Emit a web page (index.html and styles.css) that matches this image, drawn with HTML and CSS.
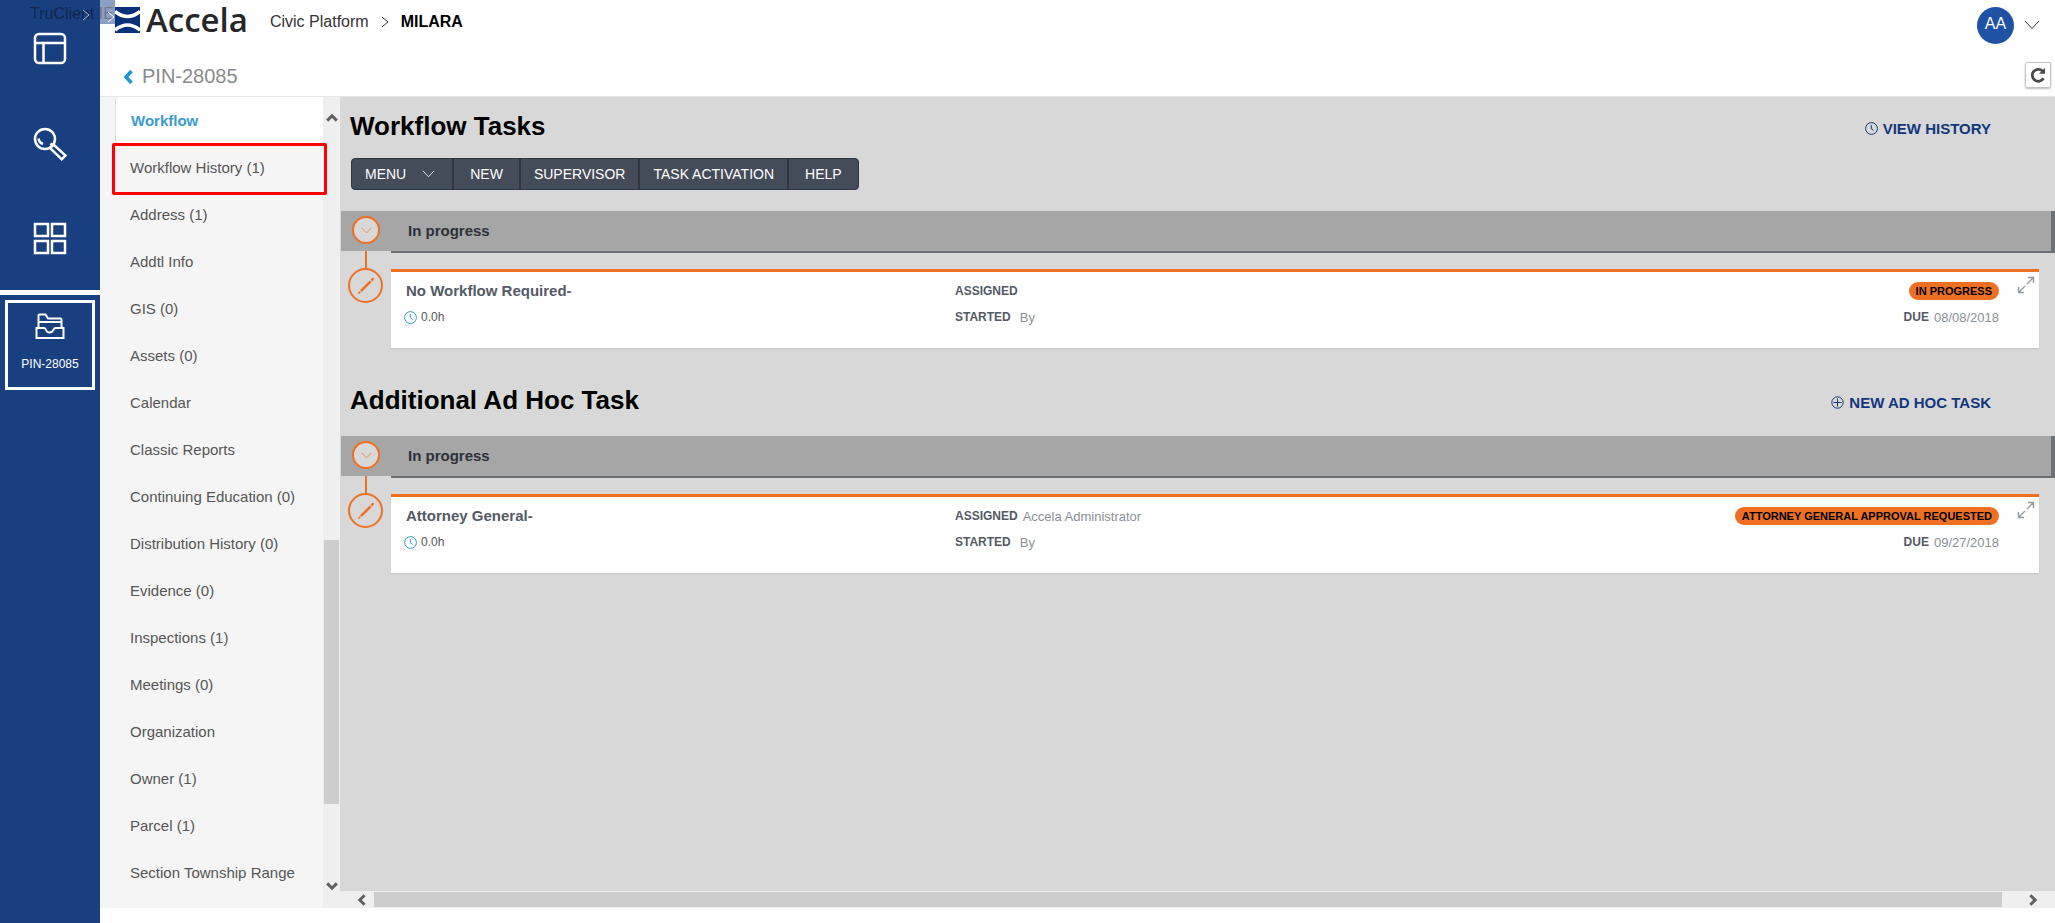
FILE: index.html
```html
<!DOCTYPE html>
<html lang="en">
<head>
<meta charset="utf-8">
<title>PIN-28085 - Civic Platform</title>
<link rel="stylesheet" href="styles.css">
</head>
<body>
<svg class="defs" aria-hidden="true">
  <symbol id="clock" viewBox="0 0 13 13"><circle cx="6.5" cy="6.5" r="5.9"/><path d="M6.3 3v3.8L8.6 8.4"/></symbol>
  <symbol id="plus" viewBox="0 0 13 13"><circle cx="6.5" cy="6.5" r="5.7"/><path d="M6.5 2.5v8M2.5 6.5h8"/></symbol>
  <symbol id="chev" viewBox="0 0 16 10"><path d="M1 1l7 7.500L15 1"/></symbol>
  <symbol id="arrow" viewBox="0 0 12 12"><path d="M1.200 8.600L6 3.800l4.800 4.800"/></symbol>
  <symbol id="expand" viewBox="0 0 18 18"><path d="M10 8l6-6M11 1.500h5.500V7M8 10l-6 6M1.500 11v5.500H7"/></symbol>
  <symbol id="pencil" viewBox="0 0 18 18"><path fill="currentColor" d="M.8 17.200l1.400-3.200 1.800 1.800zM2.900 13.300L12.800 3.400l1.800 1.800L4.700 15.100zM13.500 2.700l1.700-1.700q.8-.6 1.500 0t.1 1.500l-1.600 1.900z"/></symbol>
</svg>
<div class="app">
  <aside class="rail">
    <a class="rail-link" href="#" aria-label="Dashboard"><svg class="rail-icon" viewBox="0 0 34 34"><rect x="2" y="2" width="30" height="29" rx="4"/><path d="M2 11h30M10.500 11v20"/></svg></a>
    <a class="rail-link" href="#" aria-label="Search"><svg class="rail-icon" viewBox="0 0 34 34"><circle cx="12" cy="12" r="10"/><path d="M5.500 11.500q.5 4 4.500 5.500M17 21l3.500-3.500 12 11-3.800 3.800zM19.500 18.500l-2-2"/></svg></a>
    <a class="rail-link" href="#" aria-label="Apps"><svg class="rail-icon" viewBox="0 0 34 34"><path d="M2 2h13v12H2zM19 2h13v12H19zM2 19h13v12H2zM19 19h13v12H19z"/></svg></a>
    <div class="rail-tab">
      <a class="record-tab" href="#">
        <svg class="record-icon" viewBox="0 0 30 27"><path d="M3.500 15V2.500q0-1 1-1h6l2.500 4h12.500q1 0 1 1V15M3.500 9h23M1.500 15h7.500q1.500 0 2 2 1 2.500 3.500 2.500T18.500 17q.5-2 2-2h8v10h-27z"/></svg>
        <span>PIN-28085</span>
      </a>
    </div>
  </aside>
  <div class="page">
    <header class="header">
      <div class="top-row">
        <a class="logo" href="#">
          <svg class="logo-mark" viewBox="0 0 25 26"><path fill="#06307a" d="M0 0h25v26H0z"/><path d="M0 4.500q12.500 10 25 0M0 23q12.500-10 25 0" fill="none" stroke="#fff" stroke-width="3.600"/></svg>
          <span class="logo-name">Accela</span>
        </a>
        <nav class="crumbs" aria-label="Breadcrumb">
          <a href="#">Civic Platform</a>
          <svg class="crumb-sep" viewBox="0 0 8 12"><path d="M1 1l6 5-6 5"/></svg>
          <strong>MILARA</strong>
        </nav>
        <button class="account" type="button"><span class="avatar">AA</span><svg class="account-chev"><use href="#chev"/></svg></button>
      </div>
      <div class="record-row">
        <a class="back" href="#"><svg class="back-icon" viewBox="0 0 10 14"><path d="M8.500 1L3 7l5.500 6"/></svg>PIN-28085</a>
        <button class="refresh" type="button" aria-label="Refresh"><svg class="refresh-icon" viewBox="0 0 16 16"><path d="M13.500 11.300A6 6 0 1 1 12.500 4" fill="none" stroke="#4a4a4a" stroke-width="2.800"/><path d="M15 .8v6H9z" fill="#4a4a4a"/></svg></button>
      </div>
    </header>
    <div class="body">
      <nav class="side" aria-label="Record sections">
        <a class="item active" href="#">Workflow</a>
        <a class="item marked" href="#">Workflow History (1)</a>
        <a class="item" href="#">Address (1)</a>
        <a class="item" href="#">Addtl Info</a>
        <a class="item" href="#">GIS (0)</a>
        <a class="item" href="#">Assets (0)</a>
        <a class="item" href="#">Calendar</a>
        <a class="item" href="#">Classic Reports</a>
        <a class="item" href="#">Continuing Education (0)</a>
        <a class="item" href="#">Distribution History (0)</a>
        <a class="item" href="#">Evidence (0)</a>
        <a class="item" href="#">Inspections (1)</a>
        <a class="item" href="#">Meetings (0)</a>
        <a class="item" href="#">Organization</a>
        <a class="item" href="#">Owner (1)</a>
        <a class="item" href="#">Parcel (1)</a>
        <a class="item" href="#">Section Township Range</a>
      </nav>
      <div class="vscroll">
        <svg class="arrow"><use href="#arrow"/></svg>
        <div class="vtrack"><div class="vthumb"></div></div>
        <svg class="arrow down"><use href="#arrow"/></svg>
      </div>
      <div class="main-col">
        <main class="main">
          <section>
            <div class="head">
              <h2>Workflow Tasks</h2>
              <a class="action" href="#"><svg class="action-icon"><use href="#clock"/></svg>VIEW HISTORY</a>
            </div>
            <div class="toolbar">
              <button class="tool menu" type="button">MENU<svg class="tool-chev"><use href="#chev"/></svg></button>
              <button class="tool wide" type="button">NEW</button>
              <button class="tool" type="button">SUPERVISOR</button>
              <button class="tool" type="button">TASK ACTIVATION</button>
              <button class="tool wide" type="button">HELP</button>
            </div>
            <div class="status">
              <button class="toggle" type="button" aria-label="Collapse"><svg class="toggle-chev"><use href="#chev"/></svg></button>
              <h3>In progress</h3>
            </div>
            <div class="task">
              <div class="node"><button class="edit" type="button" aria-label="Edit task"><svg class="edit-icon"><use href="#pencil"/></svg></button></div>
              <article class="card">
                <div class="cell"><h4>No Workflow Required-</h4><div class="hours"><svg class="hours-icon"><use href="#clock"/></svg>0.0h</div></div>
                <div class="cell"><div class="line"><b>ASSIGNED</b></div><div class="line"><b>STARTED</b><span class="by">By</span></div></div>
                <div class="cell end"><div class="line"><span class="pill">IN PROGRESS</span></div><div class="line"><b>DUE</b><span>08/08/2018</span></div></div>
                <button class="expand" type="button" aria-label="Expand"><svg class="expand-icon"><use href="#expand"/></svg></button>
              </article>
            </div>
          </section>
          <section class="adhoc">
            <div class="head">
              <h2>Additional Ad Hoc Task</h2>
              <a class="action" href="#"><svg class="action-icon"><use href="#plus"/></svg>NEW AD HOC TASK</a>
            </div>
            <div class="status">
              <button class="toggle" type="button" aria-label="Collapse"><svg class="toggle-chev"><use href="#chev"/></svg></button>
              <h3>In progress</h3>
            </div>
            <div class="task">
              <div class="node"><button class="edit" type="button" aria-label="Edit task"><svg class="edit-icon"><use href="#pencil"/></svg></button></div>
              <article class="card">
                <div class="cell"><h4>Attorney General-</h4><div class="hours"><svg class="hours-icon"><use href="#clock"/></svg>0.0h</div></div>
                <div class="cell"><div class="line"><b>ASSIGNED</b><span>Accela Administrator</span></div><div class="line"><b>STARTED</b><span class="by">By</span></div></div>
                <div class="cell end"><div class="line"><span class="pill">ATTORNEY GENERAL APPROVAL REQUESTED</span></div><div class="line"><b>DUE</b><span>09/27/2018</span></div></div>
                <button class="expand" type="button" aria-label="Expand"><svg class="expand-icon"><use href="#expand"/></svg></button>
              </article>
            </div>
          </section>
        </main>
        <div class="hscroll">
          <svg class="arrow left"><use href="#arrow"/></svg>
          <div class="hthumb"></div>
          <svg class="arrow right"><use href="#arrow"/></svg>
        </div>
      </div>
    </div>
  </div>
  <div class="client-tag">TruClient <span class="tag-end">IE</span><svg class="tag-arrow" viewBox="0 0 8 12"><path d="M1 1l6 5-6 5"/></svg><svg class="tag-arrow second" viewBox="0 0 8 12"><path d="M1 1l6 5-6 5"/></svg></div>
</div>
</body>
</html>
```
FILE: styles.css
```css
* { box-sizing: border-box; }
body { margin: 0; font-family: "Liberation Sans", Arial, sans-serif; font-size: 15px; color: #555; background: #fff; }
a { color: inherit; text-decoration: none; }
button { font: inherit; color: inherit; background: none; border: 0; padding: 0; }
h2, h3, h4 { margin: 0; }
svg { display: block; flex: none; fill: none; stroke: currentColor; }
.defs { display: none; }

.app { position: relative; display: grid; grid-template-columns: 100px 1fr; min-height: 100vh; }

/* icon rail */
.rail { background: #183f80; color: #fff; padding-top: 1px; }
.rail-link { display: flex; height: 95px; align-items: center; justify-content: center; }
.rail-link:last-of-type { height: 99px; padding-bottom: 4px; }
.rail-icon { width: 34px; height: 34px; stroke-width: 2.5; }
.rail-tab { border-top: 5px solid #fff; padding: 5px; }
.record-tab { display: flex; flex-direction: column; align-items: center; justify-content: center; gap: 16px; height: 90px; padding-bottom: 5px; border: 3px solid #fff; font-size: 12px; line-height: 16px; }
.record-icon { width: 30px; height: 27px; stroke-width: 2; }

/* header */
.page { display: flex; flex-direction: column; min-width: 0; padding-bottom: 15px; }
.header { height: 97px; border-bottom: 1px solid #e6e6e6; }
.top-row { display: flex; align-items: center; height: 50px; padding: 0 15px; }
.logo { display: flex; align-items: center; gap: 6px; height: 40px; margin-bottom: 10px; color: #262729; }
.logo-mark { width: 25px; height: 26px; stroke: none; }
.logo-name { font: 600 33px/40px "Open Sans", "Noto Sans", sans-serif; }
.crumbs { display: flex; align-items: center; gap: 12px; margin: 0 auto 7px 22px; font-size: 16px; color: #333; }
.crumbs strong { color: #000; }
.crumb-sep { width: 8px; height: 12px; }
.account { display: flex; align-items: center; gap: 10px; color: #333; }
.avatar { width: 37px; height: 37px; border-radius: 50%; background: #1d52a5; color: #fff; font-size: 16px; line-height: 34px; text-align: center; }
.account-chev { width: 16px; height: 10px; }
.record-row { display: flex; align-items: center; justify-content: space-between; height: 46px; padding: 4px 4px 0 23px; }
.back { display: flex; align-items: center; gap: 9px; padding-top: 3px; font-size: 20px; color: #8a8a8a; }
.back-icon { width: 10px; height: 14px; color: #1b95d4; stroke-width: 3.5; }
.refresh { display: flex; align-items: center; justify-content: center; width: 26px; height: 26px; border: 1px solid #c4c4c4; border-radius: 2px; box-shadow: 0 1px 2px #bbb; }
.refresh-icon { width: 16px; height: 16px; stroke: none; }

/* section list */
.body { flex: 1; display: grid; grid-template-columns: 223px 17px minmax(0, 1fr); }
.side { background: #f5f5f5; padding-left: 15px; }
.item { display: flex; align-items: center; height: 47px; padding: 0 0 1px 15px; }
.active { background: #fff; color: #3a9bd0; font-weight: bold; border-left: 1px solid #ddd; border-radius: 4px 0 0 4px; }
.marked { position: relative; }
.marked::after { content: ""; position: absolute; inset: -1px -4px -4px -3px; border: 3px solid #f00; border-radius: 2px; }

/* scrollbars */
.vscroll { display: flex; flex-direction: column; align-items: center; padding: 15px 0 16px; background: #efefef; }
.arrow { width: 12px; height: 12px; color: #606060; stroke-width: 3; }
.down { transform: rotate(180deg); }
.left { transform: rotate(-90deg); }
.right { transform: rotate(90deg); }
.vtrack { flex: 1; width: 15px; display: grid; grid-template-rows: 55fr 35fr 10fr; }
.vthumb { grid-row: 2; background: #cdcdcd; }
.hscroll { display: flex; align-items: center; height: 17px; padding: 0 16px; background: #efefef; }
.hthumb { flex: 1; height: 15px; margin: 0 25px 0 6px; background: #cdcdcd; }

/* workflow */
.main-col { display: flex; flex-direction: column; }
.main { flex: 1; background: #d8d8d8; padding: 14px 0 0 1px; }
.adhoc { margin-top: 37px; }
.head { display: flex; align-items: center; justify-content: space-between; height: 30px; padding: 0 64px 0 9px; color: #000; }
h2 { font-size: 26px; line-height: 30px; }
.action { display: flex; align-items: center; gap: 5px; margin-top: 4px; color: #12377c; font-weight: bold; }
.action-icon { width: 13px; height: 13px; }
.toolbar { display: flex; width: max-content; height: 32px; margin: 17px 0 0 10px; border: 1px solid #2f3640; border-radius: 4px; background: #454c59; color: #fff; font-size: 14px; }
.tool { display: flex; align-items: center; gap: 16px; padding: 0 13px; }
.menu { padding-right: 17px; }
.wide { padding: 0 16px; }
.tool + .tool { border-left: 2px solid #2f3640; }
.tool-chev { width: 13px; height: 8px; }
.status { position: relative; display: flex; align-items: center; gap: 28px; height: 40px; margin-top: 21px; padding-left: 11px; background: #a6a6a6; border-right: 4px solid #6c6f75; color: #2d3039; }
.status::after { content: ""; position: absolute; left: 50px; right: -4px; top: 100%; height: 2px; background: #6c7075; }
h3 { font-size: 15px; line-height: 20px; }
.toggle { display: flex; align-items: center; justify-content: center; width: 28px; height: 28px; margin-bottom: 2px; border: 2px solid #f07023; border-radius: 50%; background: #d8d8d8; color: #f07023; }
.toggle-chev { width: 11px; height: 7px; }
.task { display: flex; gap: 8px; padding: 0 16px 0 7px; }
.node { width: 35px; }
.node::before { content: ""; display: block; width: 2px; height: 17px; margin: 0 auto; background: #f07023; }
.edit { display: flex; align-items: center; justify-content: center; width: 35px; height: 35px; border: 2px solid #f07023; border-radius: 50%; color: #f07023; }
.edit-icon { width: 18px; height: 18px; stroke: none; }
.card { position: relative; flex: 1; display: grid; grid-template-columns: 549px 1fr auto; min-height: 79px; margin-top: 18px; padding: 9px 40px 0 15px; background: #fff; border-top: 3px solid #f07023; box-shadow: 0 1px 1px #c8c8c8; }
h4 { font-size: 15px; line-height: 20px; color: #535a66; }
.cell { display: flex; flex-direction: column; gap: 6px; }
.hours { display: flex; align-items: center; gap: 4px; height: 20px; font-size: 12px; margin-left: -2px; }
.hours-icon { width: 13px; height: 13px; color: #2f9fd0; }
.line { display: flex; align-items: center; gap: 5px; height: 20px; font-size: 13px; color: #8b9097; }
.line b { font-size: 12px; color: #535a66; }
.by { padding-left: 4px; }
.end { align-items: flex-end; }
.pill { height: 18px; padding: 0 7px; border-radius: 9px; background: #f07023; color: #000; font-weight: bold; font-size: 11px; line-height: 18px; }
.expand { position: absolute; top: 4px; right: 4px; color: #9299a5; }
.expand-icon { width: 18px; height: 18px; stroke-width: 1.4; }

/* recorder label floating over the rail */
.client-tag { position: absolute; left: 0; top: 0; width: 115px; height: 24px; padding: 5px 0 0 30px; overflow: hidden; font-size: 16px; line-height: 18px; color: #11264d; white-space: nowrap; background: linear-gradient(90deg, transparent 100px, #8ba0c3 100px); }
.tag-end { color: #74798a; }
.tag-arrow { position: absolute; left: 82px; top: 9px; width: 8px; height: 12px; color: #a9b7d0; }
.second { left: 107px; top: 11px; color: #fff; }
```
